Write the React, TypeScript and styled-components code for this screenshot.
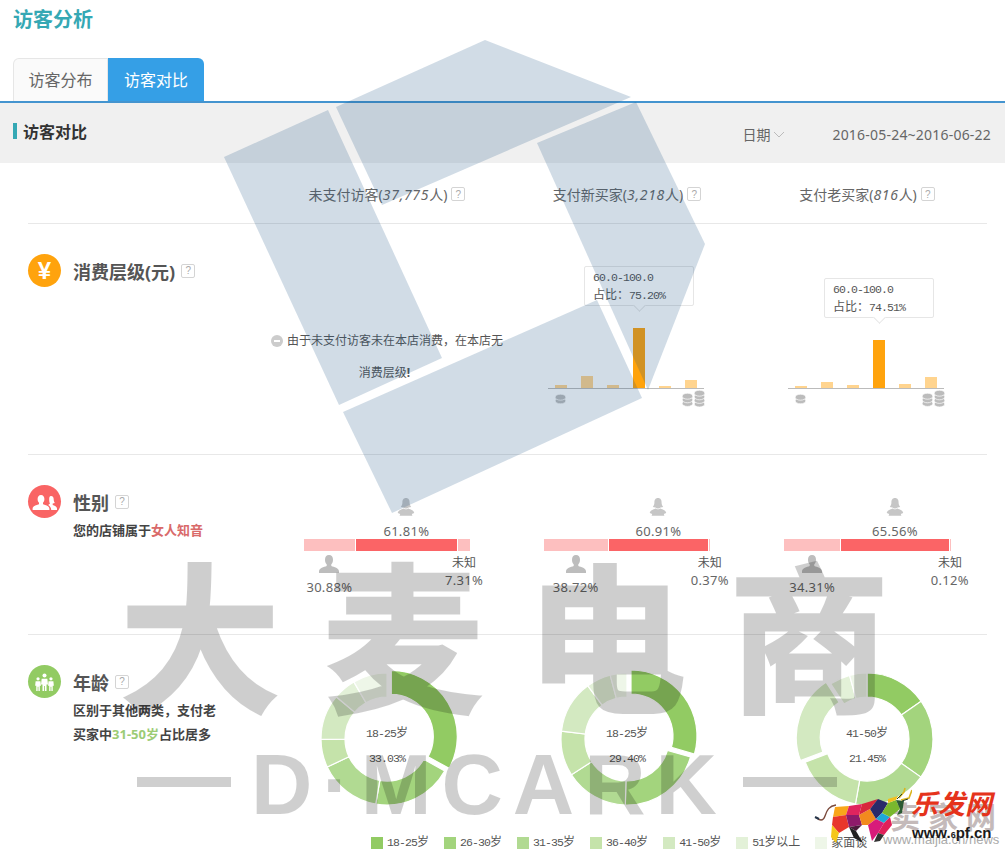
import React from "react";
import styled, { createGlobalStyle } from "styled-components";

const Global = createGlobalStyle`
  html, body { margin: 0; padding: 0; background: #fff; }
  body { font-family: "Noto Sans", "Noto Sans CJK SC", sans-serif; color: #555; }
  * { box-sizing: border-box; }
`;

const Page = styled.div`
  position: relative;
  width: 1005px;
  height: 853px;
  overflow: hidden;
  background: #fff;
`;
const Title = styled.h1`
  margin: 0;
  height: 58px;
  padding-left: 13px;
  font-size: 20px;
  line-height: 40px;
  font-weight: 700;
  color: #35a8b4;
`;
const TabBar = styled.div`
  display: flex;
  height: 45px;
  padding-left: 13px;
  border-bottom: 2px solid #4494cf;
`;
const Tab = styled.div<{ $active?: boolean }>`
  height: 43px;
  padding-bottom: 2px;
  display: flex;
  align-items: center;
  justify-content: center;
  font-size: 16px;
  color: ${(p) => (p.$active ? "#fff" : "#666")};
  background: ${(p) => (p.$active ? "#359fe6" : "#fafafa")};
  border: ${(p) => (p.$active ? "none" : "1px solid #e6e6e6")};
  border-bottom: none;
  border-radius: ${(p) => (p.$active ? "0 6px 0 0" : "6px 0 0 0")};
  width: ${(p) => (p.$active ? "96px" : "95px")};
`;
const Toolbar = styled.div`
  display: flex;
  justify-content: space-between;
  height: 60px;
  padding: 0 14px 0 13px;
  background: #f0f0f0;
`;
const Heading = styled.div`
  display: flex;
  align-items: center;
  gap: 6px;
  height: 16px;
  margin-top: 20px;
  padding-bottom: 1px;
  font-size: 16px;
  font-weight: 700;
  color: #333;
  &::before {
    content: "";
    width: 4px;
    height: 16px;
    background: #35a8b4;
  }
`;
const DateBox = styled.div`
  display: flex;
  align-items: center;
  height: 20px;
  margin-top: 21px;
  font-size: 14px;
  color: #666;
`;
const DateLabel = styled.span`
  margin-right: 3px;
`;
const DateValue = styled.span`
  margin-left: 47px;
  letter-spacing: 0.015em;
`;
const Table = styled.div`
  padding: 0 18px 0 28px;
`;
const Row = styled.div<{ $height: number; $last?: boolean }>`
  display: grid;
  grid-template-columns: 239px repeat(3, 240px);
  height: ${(p) => p.$height}px;
  border-bottom: ${(p) => (p.$last ? "none" : "1px solid #e8e8e8")};
`;
const ColHead = styled.div`
  display: flex;
  justify-content: center;
  align-items: center;
  gap: 4px;
  height: 20px;
  margin-top: 21px;
  font-size: 14px;
  color: #666;
  em {
    font-style: italic;
    letter-spacing: 0.7px;
  }
`;
const Help = styled.span`
  flex: none;
  display: inline-flex;
  align-items: center;
  justify-content: center;
  width: 14px;
  height: 14px;
  border: 1px solid #d4d4d4;
  border-radius: 2px;
  background: #fff;
  font-family: "Liberation Sans", sans-serif;
  font-size: 10px;
  font-weight: 400;
  color: #aaa;
`;
const SideCell = styled.div`
  padding-top: 30px;
`;
const SideHead = styled.div`
  display: flex;
  align-items: center;
  height: 33px;
`;
const Badge = styled.div<{ $color: string }>`
  flex: none;
  width: 33px;
  height: 33px;
  border-radius: 50%;
  background: ${(p) => p.$color};
  display: flex;
  align-items: center;
  justify-content: center;
  color: #fff;
  font-family: "Liberation Sans", sans-serif;
  font-size: 24px;
  font-weight: 700;
`;
const SideTitle = styled.div`
  margin: 0 6px 0 12px;
  font-size: 18px;
  font-weight: 700;
  color: #555;
`;
const SideNote = styled.div`
  margin-left: 45px;
  font-size: 13px;
  line-height: 24px;
  font-weight: 700;
  color: #444;
  white-space: nowrap;
`;
const Accent = styled.span<{ $color: string }>`
  color: ${(p) => p.$color};
`;
const Message = styled.div`
  padding-top: 101px;
  font-size: 12px;
  line-height: 32px;
  text-align: center;
  color: #555;
  white-space: nowrap;
`;
const Bang = styled.b`
  margin-right: 5px;
`;
const MinusDot = styled.span`
  display: inline-block;
  position: relative;
  top: 2px;
  width: 12px;
  height: 12px;
  margin-right: 4px;
  border-radius: 50%;
  background: #ccc;
  &::after {
    content: "";
    position: absolute;
    left: 3px;
    top: 5px;
    width: 6px;
    height: 2px;
    background: #fff;
  }
`;
const ChartCell = styled.div`
  width: 156px;
  margin: 64px 0 0 41px;
`;
const Bars = styled.div`
  display: flex;
  align-items: flex-end;
  gap: 14px;
  height: 101px;
  padding-left: 7px;
  border-bottom: 1px solid #bbb;
`;
const Bar = styled.div<{ $active?: boolean }>`
  position: relative;
  width: 12px;
  background: ${(p) => (p.$active ? "#ffa30d" : "#ffd48f")};
`;
const Tooltip = styled.div`
  position: absolute;
  bottom: calc(100% + 22px);
  left: 50%;
  width: 110px;
  height: 40px;
  margin-left: -55px;
  padding: 1px 0 0 8px;
  background: #fff;
  border: 1px solid #e6e6e6;
  border-radius: 2px;
  font-size: 12px;
  line-height: 17px;
  color: #555;
  white-space: nowrap;
  &::after {
    content: "";
    position: absolute;
    left: 50%;
    bottom: -5px;
    width: 8px;
    height: 8px;
    margin-left: -4px;
    background: #fff;
    border-right: 1px solid #e6e6e6;
    border-bottom: 1px solid #e6e6e6;
    transform: rotate(45deg);
  }
`;
const Digits = styled.span`
  font-family: "Liberation Mono", monospace;
  font-size: 11.5px;
  letter-spacing: -0.9px;
`;
const CoinRow = styled.div`
  display: flex;
  justify-content: space-between;
  align-items: flex-end;
  height: 18px;
  padding-left: 7px;
  margin-right: -1px;
`;
const CoinLone = styled.div`
  display: flex;
  margin-bottom: 3px;
`;
const CoinGroup = styled.div`
  display: flex;
  align-items: flex-end;
  gap: 1px;
`;
const GenderCell = styled.div`
  display: flex;
  gap: 1px;
  width: 166px;
  margin-left: 37px;
`;
const GenderPart = styled.div`
  display: flex;
  flex-direction: column;
  align-items: center;
  flex: none;
`;
const GenderTop = styled.div`
  display: flex;
  flex-direction: column;
  align-items: center;
  justify-content: flex-end;
  height: 84px;
  gap: 7px;
`;
const GenderBlock = styled.div<{ $main?: boolean }>`
  align-self: stretch;
  height: 12px;
  background: ${(p) => (p.$main ? "#fb6466" : "#fdbfbf")};
`;
const GenderBottom = styled.div<{ $tight?: boolean }>`
  display: flex;
  flex-direction: column;
  align-items: center;
  gap: ${(p) => (p.$tight ? "1px" : "6px")};
  padding-top: 4px;
`;
const Pct = styled.div`
  font-size: 13px;
  line-height: 16px;
  letter-spacing: 0.3px;
  color: #666;
  white-space: nowrap;
`;
const Unknown = styled.div`
  font-size: 12px;
  line-height: 16px;
  color: #555;
  white-space: nowrap;
`;
const DonutCell = styled.div`
  position: relative;
  width: 150px;
  height: 150px;
  margin: 29px auto 0;
`;
const DonutText = styled.div`
  position: absolute;
  left: 0;
  right: 0;
  top: 57px;
  font-size: 12px;
  line-height: 24px;
  text-align: center;
  color: #555;
`;
const Legend = styled.div`
  display: flex;
  gap: 15px;
  margin: 22px 0 0 343px;
`;
const LegendItem = styled.div`
  display: flex;
  align-items: center;
  gap: 4px;
  font-size: 12px;
  line-height: 12px;
  color: #555;
  white-space: nowrap;
`;
const Swatch = styled.span<{ $color: string }>`
  width: 12px;
  height: 12px;
  background: ${(p) => p.$color};
`;
const Watermark = styled.div`
  position: absolute;
  inset: 0;
  pointer-events: none;
`;
const Shapes = styled.svg`
  position: absolute;
  left: 0;
  top: 0;
`;
const BigBrand = styled.div`
  position: absolute;
  left: 120px;
  top: 510px;
  font-family: "Noto Sans CJK SC", sans-serif;
  font-size: 160px;
  line-height: 240px;
  font-weight: 700;
  letter-spacing: 43px;
  color: #000;
  opacity: 0.19;
  -webkit-text-stroke: 3px #000;
  white-space: nowrap;
`;
const BrandLine = styled.div`
  position: absolute;
  left: 137px;
  top: 742px;
  width: 700px;
  display: flex;
  align-items: center;
  justify-content: space-between;
  height: 80px;
`;
const BrandDash = styled.span`
  width: 94px;
  height: 10px;
  background: rgba(0, 0, 0, 0.19);
`;
const BrandLatin = styled.span`
  padding: 6px 0 0 4px;
  font-family: "Liberation Sans", sans-serif;
  font-size: 85px;
  line-height: 80px;
  font-weight: 700;
  letter-spacing: 10px;
  color: rgba(0, 0, 0, 0.19);
  white-space: nowrap;
`;
const LogoGhost = styled.div`
  position: absolute;
  left: 890px;
  top: 800px;
  font-size: 30px;
  line-height: 34px;
  font-weight: 700;
  letter-spacing: 8px;
  color: #c4baba;
  white-space: nowrap;
`;
const LogoGhostUrl = styled.div`
  position: absolute;
  left: 883px;
  top: 832px;
  font-family: "Liberation Sans", sans-serif;
  font-size: 13px;
  line-height: 16px;
  color: #aaa;
  white-space: nowrap;
`;
const LogoBull = styled.svg`
  position: absolute;
  left: 812px;
  top: 785px;
`;
const LogoName = styled.div`
  position: absolute;
  left: 911px;
  top: 786px;
  font-size: 27px;
  line-height: 36px;
  font-weight: 700;
  font-style: italic;
  color: #e5331b;
  white-space: nowrap;
`;
const LogoUrl = styled.div`
  position: absolute;
  left: 912px;
  top: 824px;
  font-family: "Liberation Sans", sans-serif;
  font-size: 15px;
  line-height: 18px;
  font-weight: 700;
  color: #1a1a1a;
  white-space: nowrap;
  small {
    font-size: 9px;
  }
`;

const Chevron = () => (
  <svg width="12" height="7" viewBox="0 0 12 7" fill="none" stroke="#bbb" strokeWidth="1">
    <path d="M1 1l5 5 5-5" />
  </svg>
);

const Female = () => (
  <svg width="18" height="18" viewBox="0 0 18 18" fill="#c6c6c6">
    <path d="M9 0C6.2 0 5.4 2.2 5.4 4.6c0 2-.6 3.4-1.6 4.4l2.6.5c.7.6 1.6 1 2.6 1s1.900-.4 2.600-1l2.600-.5c-1-1-1.600-2.400-1.600-4.400C12.600 2.200 11.800 0 9 0z" />
    <path d="M6.800 10.400C4 11.400.8 12.600.8 15l2.400 1-.6 1.800h12.800l-.6-1.800 2.400-1c0-2.400-3.200-3.600-6-4.600-.8.600-1.600.9-2.200.9s-1.400-.3-2.200-.9z" />
  </svg>
);
const Male = () => (
  <svg width="20" height="18" viewBox="0 0 20 18" fill="#bdbdbd">
    <path d="M10 0c2.600 0 4 2 4 4.800 0 2-.7 3.500-1.700 4.500v1.600c2.800 1 7.700 2.200 7.700 5.400V18H0v-1.700c0-3.200 4.900-4.400 7.700-5.400V9.300C6.700 8.300 6 6.800 6 4.800 6 2 7.400 0 10 0z" />
  </svg>
);
const GenderGlyph = () => (
  <svg width="26" height="18" viewBox="0 0 26 18" fill="#fff">
    <path d="M9 2c2.200 0 3.400 1.700 3.400 4 0 1.700-.6 3-1.400 3.800v1.400c2.400.8 6.400 1.800 6.400 4.500V17H.6v-1.300c0-2.700 4-3.700 6.400-4.500V9.800C6.200 9 5.600 7.700 5.600 6 5.600 3.700 6.800 2 9 2z" />
    <path d="M19 3c2 0 2.700 1.600 2.700 3.300 0 1.500.4 2.800 1.200 3.600l-2.200.5V12c1.800.6 4.300 1.500 4.300 3.400V17h-5.800c0-2.600-1.500-4-3-5l1.800-1.600c-.6-1-.8-2.400-.8-4C17.200 4.700 17.400 3 19 3z" />
  </svg>
);
const AgeGlyph = () => (
  <svg width="21" height="18" viewBox="0 0 26 22" fill="#fff">
    <circle cx="13" cy="3" r="2.500" />
    <path d="M9.500 7h7l.8 7h-1.800v8h-2v-6h-1v6h-2v-8H8.700z" />
    <circle cx="5" cy="7" r="2" />
    <path d="M2 10h6l.6 5.500H7.200V22H5.500v-5h-1v5H2.800v-6.500H1.400z" />
    <circle cx="21" cy="7" r="2" />
    <path d="M18 10h6l.6 5.500h-1.400V22h-1.700v-5h-1v5h-1.700v-6.500h-1.400z" />
  </svg>
);
const Coins = ({ layers }: { layers: number }) => {
  const h = 6.5 + (layers - 1) * 3.6;
  return (
    <svg width="11" height={Math.round(h)} viewBox={`0 0 11 ${Math.round(h)}`}>
      {Array.from({ length: layers }, (_, i) => layers - 1 - i).map((i) => (
        <ellipse
          key={i}
          cx="5.500"
          cy={3.2 + i * 3.6}
          rx="5.300"
          ry="3"
          fill="#bcbcbc"
          stroke="#fff"
          strokeWidth="0.7"
        />
      ))}
    </svg>
  );
};

const COLORS = ["#92cb63", "#a3d47d", "#b1da92", "#c5e3aa", "#d3e9c1", "#e3f1d8", "#eef6e8"];

const point = (cx: number, cy: number, r: number, deg: number) => {
  const a = ((deg - 90) * Math.PI) / 180;
  return [cx + r * Math.cos(a), cy + r * Math.sin(a)];
};

const Donut = ({ parts, burst }: { parts: number[]; burst: number }) => {
  let start = 0;
  const R = 66;
  const r = 42;
  return (
    <svg width="150" height="150" viewBox="0 0 150 150">
      {parts.map((p, i) => {
        const end = i === parts.length - 1 ? 360 : start + p * 3.6;
        const mid = (start + end) / 2;
        const [dx, dy] = i === burst ? point(0, 0, 5, mid) : [0, 0];
        const [ax, ay] = point(75, 75, R, start);
        const [bx, by] = point(75, 75, R, end);
        const [cx, cy] = point(75, 75, r, end);
        const [ex, ey] = point(75, 75, r, start);
        const large = end - start > 180 ? 1 : 0;
        const d = `M${ax} ${ay}A${R} ${R} 0 ${large} 1 ${bx} ${by}L${cx} ${cy}A${r} ${r} 0 ${large} 0 ${ex} ${ey}Z`;
        start = end;
        return (
          <path
            key={i}
            d={d}
            fill={COLORS[i]}
            stroke="#fff"
            strokeWidth="1.200"
            transform={`translate(${dx} ${dy})`}
          />
        );
      })}
    </svg>
  );
};

const LEGEND = ["18-25", "26-30", "31-35", "36-40", "41-50"];

const spend = [
  { bars: [3, 12, 3, 60, 2, 8], tip: "75.20%" },
  { bars: [2, 6, 3, 48, 4, 11], tip: "74.51%" },
];
const gender = [
  { male: 30.88, female: 61.81, other: 7.31 },
  { male: 38.72, female: 60.91, other: 0.37 },
  { male: 34.31, female: 65.56, other: 0.12 },
];
const ages = [
  { label: "18-25", pct: "33.03%", burst: 0, parts: [33.03, 19.7, 15.3, 6.9, 11.1, 5.6, 8.3] },
  { label: "18-25", pct: "29.40%", burst: 0, parts: [29.4, 21, 15.5, 11, 13, 6, 3.6] },
  { label: "41-50", pct: "21.45%", burst: 4, parts: [15.3, 19.5, 18, 16.5, 21.45, 5, 4.25] },
];

const BULL: [string, string][] = [
  ["#f9a61a", "23,22 37,21 34,30 21,32"],
  ["#e8372c", "21,32 34,30 37,42 27,48 20,40"],
  ["#f5c71a", "20,40 27,48 24,58 19,52"],
  ["#e0245e", "37,21 50,19 47,30 34,30"],
  ["#8e1a6a", "34,30 47,30 50,40 37,42"],
  ["#4a1a3a", "37,42 50,40 44,46"],
  ["#222222", "37,42 44,46 51,58 42,53"],
  ["#f28a1e", "47,30 58,24 64,34 56,40 50,40"],
  ["#d8283c", "50,19 66,14 58,24 47,30"],
  ["#2a2a6a", "66,14 76,18 70,28 64,34 58,24"],
  ["#1fa8d8", "64,34 70,28 78,32 72,38"],
  ["#7ab82e", "76,18 84,15 88,24 78,32 70,28"],
  ["#d81b7a", "56,40 64,34 72,38 66,48 60,56"],
  ["#f3c01e", "76,14 86,11 84,15 76,18"],
  ["#2b5a34", "84,15 92,16 90,28 85,30 88,24"],
  ["#e0205a", "72,38 78,32 80,40 72,50 66,48"],
  ["#333333", "66,48 72,50 68,56 62,57"],
];

export default function App() {
  return (
    <Page>
      <Global />
      <Title>访客分析</Title>
      <TabBar>
        <Tab>访客分布</Tab>
        <Tab $active>访客对比</Tab>
      </TabBar>
      <Toolbar>
        <Heading>访客对比</Heading>
        <DateBox>
          <DateLabel>日期</DateLabel>
          <Chevron />
          <DateValue>2016-05-24~2016-06-22</DateValue>
        </DateBox>
      </Toolbar>
      <Table>
        <Row $height={61}>
          <div />
          <ColHead>
            <span>未支付访客(<em>37,775</em>人)</span>
            <Help>?</Help>
          </ColHead>
          <ColHead>
            <span>支付新买家(<em>3,218</em>人)</span>
            <Help>?</Help>
          </ColHead>
          <ColHead>
            <span>支付老买家(<em>816</em>人)</span>
            <Help>?</Help>
          </ColHead>
        </Row>
        <Row $height={231}>
          <SideCell>
            <SideHead>
              <Badge $color="#ffa30d">¥</Badge>
              <SideTitle>消费层级(元)</SideTitle>
              <Help>?</Help>
            </SideHead>
          </SideCell>
          <Message>
            <MinusDot />
            由于未支付访客未在本店消费，在本店无
            <br />
            消费层级<Bang>!</Bang>
          </Message>
          {spend.map((s) => (
            <ChartCell key={s.tip}>
              <Bars>
                {s.bars.map((h, i) => (
                  <Bar key={i} $active={i === 3} style={{ height: h }}>
                    {i === 3 && (
                      <Tooltip>
                        <Digits>60.0-100.0</Digits>
                        <br />
                        占比：<Digits>{s.tip}</Digits>
                      </Tooltip>
                    )}
                  </Bar>
                ))}
              </Bars>
              <CoinRow>
                <CoinLone>
                  <Coins layers={2} />
                </CoinLone>
                <CoinGroup>
                  <Coins layers={3} />
                  <Coins layers={4} />
                </CoinGroup>
              </CoinRow>
            </ChartCell>
          ))}
        </Row>
        <Row $height={180}>
          <SideCell>
            <SideHead>
              <Badge $color="#f96464">
                <GenderGlyph />
              </Badge>
              <SideTitle>性别</SideTitle>
              <Help>?</Help>
            </SideHead>
            <SideNote>
              您的店铺属于<Accent $color="#d96a6a">女人知音</Accent>
            </SideNote>
          </SideCell>
          {gender.map((g) => (
            <GenderCell key={g.male}>
              <GenderPart style={{ width: g.male * 1.64 }}>
                <GenderTop />
                <GenderBlock />
                <GenderBottom>
                  <Male />
                  <Pct>{g.male.toFixed(2)}%</Pct>
                </GenderBottom>
              </GenderPart>
              <GenderPart style={{ width: g.female * 1.64 }}>
                <GenderTop>
                  <Female />
                  <Pct>{g.female.toFixed(2)}%</Pct>
                </GenderTop>
                <GenderBlock $main />
              </GenderPart>
              <GenderPart style={{ width: g.other * 1.64 }}>
                <GenderTop />
                <GenderBlock />
                <GenderBottom $tight>
                  <Unknown>未知</Unknown>
                  <Pct>{g.other.toFixed(2)}%</Pct>
                </GenderBottom>
              </GenderPart>
            </GenderCell>
          ))}
        </Row>
        <Row $height={179} $last>
          <SideCell>
            <SideHead>
              <Badge $color="#92cb63">
                <AgeGlyph />
              </Badge>
              <SideTitle>年龄</SideTitle>
              <Help>?</Help>
            </SideHead>
            <SideNote>
              区别于其他两类，支付老
              <br />
              买家中<Accent $color="#9ccc75">31-50岁</Accent>占比居多
            </SideNote>
          </SideCell>
          {ages.map((a, i) => (
            <DonutCell key={i}>
              <Donut parts={a.parts} burst={a.burst} />
              <DonutText>
                <Digits>{a.label}</Digits>岁
                <br />
                <Digits>{a.pct}</Digits>
              </DonutText>
            </DonutCell>
          ))}
        </Row>
        <Legend>
          {LEGEND.map((l, i) => (
            <LegendItem key={l}>
              <Swatch $color={COLORS[i]} />
              <span>
                <Digits>{l}</Digits>岁
              </span>
            </LegendItem>
          ))}
          <LegendItem>
            <Swatch $color={COLORS[5]} />
            <span>
              <Digits>51</Digits>岁以上
            </span>
          </LegendItem>
          <LegendItem>
            <Swatch $color={COLORS[6]} />
            <span>家面谈</span>
          </LegendItem>
        </Legend>
      </Table>

      <Watermark>
        <Shapes width="1005" height="853" viewBox="0 0 1005 853" fill="rgba(25,80,130,0.2)">
          <polygon points="485,40 631,97 382,205 336,107" />
          <polygon points="224,157 328,110 442,358 339,405" />
          <polygon points="537,143 636,102 705,244 648,390" />
          <polygon points="343,412 597,300 642,398 392,513" />
        </Shapes>
        <BigBrand>大麦电商</BigBrand>
        <BrandLine>
          <BrandDash />
          <BrandLatin>D·MCARK</BrandLatin>
          <BrandDash />
        </BrandLine>
      </Watermark>

      <LogoGhost>卖家网</LogoGhost>
      <LogoGhostUrl>www.maijia.cn/news</LogoGhostUrl>
      <LogoBull width="100" height="65" viewBox="0 0 100 65">
        <path d="M5 33c2 2 6 4 8-2 2-6 4-10 11-11" fill="none" stroke="#7b4a3c" strokeWidth="1.400" />
        <path d="M3 32l4 2" stroke="#27364a" strokeWidth="2" />
        {BULL.map(([c, p]) => (
          <polygon key={p} points={p} fill={c} />
        ))}
        <path d="M87 13l5-6 1-4M89 15l8-2 3-8" fill="none" stroke="#d9b51f" strokeWidth="1.600" />
        <path d="M85 14l5-5M90 16l6-2" fill="none" stroke="#26402c" strokeWidth="1" />
      </LogoBull>
      <LogoName>乐发网</LogoName>
      <LogoUrl>
        www.<small>6</small>pf.cn
      </LogoUrl>
    </Page>
  );
}
